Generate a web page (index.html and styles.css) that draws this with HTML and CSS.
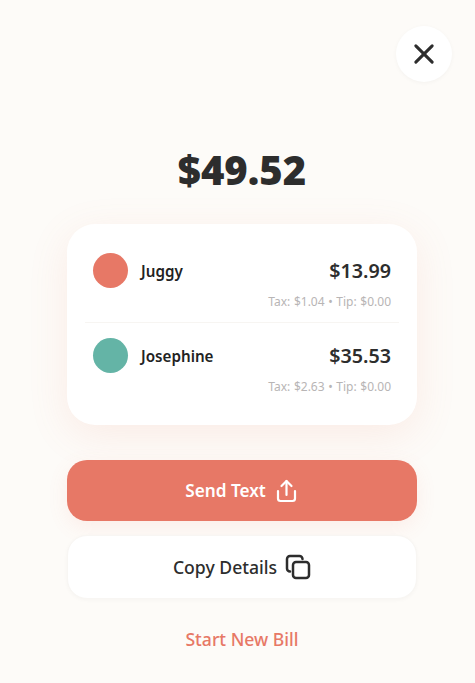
FILE: index.html
```html
<!DOCTYPE html>
<html lang="en">
<head>
  <meta charset="UTF-8">
  <meta name="viewport" content="width=device-width, initial-scale=1">
  <title>Bill Summary</title>
  <link rel="stylesheet" href="styles.css">
</head>
<body>
  <div class="screen">
    <div class="top-bar">
      <button class="close-btn" aria-label="Close">
        <svg width="28" height="28" viewBox="0 0 24 24" fill="none" stroke="currentColor" stroke-width="2.6" stroke-linecap="round">
          <path d="M5 5l14 14" />
          <path d="M19 5L5 19" />
        </svg>
      </button>
    </div>

    <h1 class="total">$49.52</h1>

    <div class="card">
      <div class="person">
        <div class="person-main">
          <span class="avatar avatar-red"></span>
          <span class="name">Juggy</span>
          <span class="amount">$13.99</span>
        </div>
        <div class="breakdown">Tax: $1.04 • Tip: $0.00</div>
      </div>
      <div class="person person-next">
        <div class="person-main">
          <span class="avatar avatar-green"></span>
          <span class="name">Josephine</span>
          <span class="amount">$35.53</span>
        </div>
        <div class="breakdown">Tax: $2.63 • Tip: $0.00</div>
      </div>
    </div>

    <button class="btn btn-send">
      Send Text
      <svg width="24" height="24" viewBox="0 0 24 24" fill="none" stroke="currentColor" stroke-width="2.2" stroke-linecap="round" stroke-linejoin="round">
        <path d="M11.500 16V2" />
        <path d="M6.500 7l5-5 5 5" />
        <path d="M3 12v7.500a2.500 2.500 0 0 0 2.500 2.500h12a2.500 2.500 0 0 0 2.500-2.500V12" />
      </svg>
    </button>
    <button class="btn btn-copy">
      Copy Details
      <svg width="26" height="26" viewBox="0 0 26 26" fill="none" stroke="currentColor" stroke-width="2.500" stroke-linecap="round" stroke-linejoin="round">
        <rect x="8" y="8" width="16" height="16" rx="3" />
        <path d="M5 17.500a3 3 0 0 1-3-3V5a3 3 0 0 1 3-3h9.500a3 3 0 0 1 3 3" />
      </svg>
    </button>
    <a class="new-bill" href="#">Start New Bill</a>
  </div>
</body>
</html>
```

FILE: styles.css
```css
body {
  margin: 0;
  background: #fdfbf8;
  font-family: "Noto Sans", "Open Sans", sans-serif;
  color: #2d2d2d;
}

.screen {
  height: 683px;
  padding: 26px 58px 0 67px;
  box-sizing: border-box;
  overflow: hidden;
}

.top-bar {
  display: flex;
  justify-content: flex-end;
  margin-right: -35px;
}

.close-btn {
  width: 56px;
  height: 56px;
  border: none;
  border-radius: 50%;
  background: #fff;
  color: #2d2d2d;
  box-shadow: 0 1px 4px rgba(0, 0, 0, 0.04);
  display: flex;
  align-items: center;
  justify-content: center;
  padding: 0;
}

.total {
  margin: 60px 0 27px;
  font-size: 40px;
  line-height: 55px;
  font-weight: 900;
  text-align: center;
}

.card {
  background: #fff;
  border-radius: 28px;
  padding: 29px 26px 30px;
  box-shadow: 0 10px 40px rgba(231, 120, 102, 0.12);
}

.person-next {
  margin: 12px -8px 0;
  padding: 15px 8px 0;
  border-top: 1px solid #f7f5f2;
}

.person-main {
  display: flex;
  align-items: center;
  height: 35px;
}

.avatar {
  width: 35px;
  height: 35px;
  border-radius: 50%;
  margin-right: 13px;
}

.avatar-red {
  background: #e77866;
}

.avatar-green {
  background: #64b4a6;
}

.name {
  font-size: 15.200px;
  font-weight: 600;
  color: #222;
}

.amount {
  margin-left: auto;
  font-size: 19.700px;
  font-weight: 600;
}

.breakdown {
  margin-top: 5px;
  font-size: 12px;
  line-height: 17px;
  color: #b8b5b5;
  text-align: right;
  word-spacing: 0.5px;
}

.btn {
  width: 100%;
  display: flex;
  align-items: center;
  justify-content: center;
  gap: 9px;
  border-radius: 20px;
  font-family: inherit;
  font-size: 17.600px;
  padding: 0;
}

.btn-send {
  height: 61px;
  margin-top: 35px;
  border: none;
  background: #e77866;
  color: #fff;
  font-size: 17.200px;
  font-weight: 600;
  box-shadow: 0 6px 20px rgba(231, 120, 102, 0.1);
}

.btn-copy {
  height: 64px;
  margin-top: 14px;
  gap: 8px;
  border: 1px solid #f8f6f3;
  background: #fff;
  color: #2d2d2d;
  font-weight: 500;
  box-shadow: 0 1px 4px rgba(0, 0, 0, 0.03);
}

.new-bill {
  display: block;
  margin-top: 28px;
  font-size: 17.600px;
  line-height: 24px;
  font-weight: 500;
  color: #e77866;
  text-align: center;
  text-decoration: none;
}
```
